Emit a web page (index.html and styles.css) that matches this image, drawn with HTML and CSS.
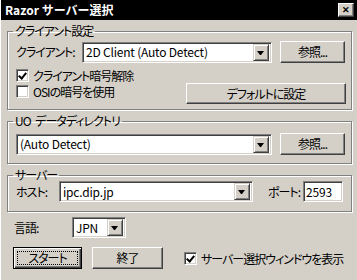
FILE: index.html
```html
<!DOCTYPE html>
<html lang="ja">
<head>
    <meta charset="UTF-8">
    <title>Razor サーバー選択</title>
    <link rel="stylesheet" href="styles.css">
</head>
<body>
    <div class="window">
        <div class="titlebar">
            <span class="title">Razor サーバー選択</span>
            <span class="close">&#x2715;</span>
        </div>
        <div class="content">
            <fieldset class="group group-client">
                <legend>クライアント設定</legend>
                <div class="row">
                    <span class="label label-client">クライアント:</span>
                    <div class="combo combo-client">
                        <span class="combo-text">2D Client (Auto Detect)</span>
                        <span class="drop"></span>
                    </div>
                    <button class="btn btn-browse">参照...</button>
                </div>
                <div class="row row-options">
                    <div class="checks">
                        <label class="check"><span class="box checked"></span>クライアント暗号解除</label>
                        <label class="check"><span class="box"></span>OSIの暗号を使用</label>
                    </div>
                    <button class="btn btn-default">デフォルトに設定</button>
                </div>
            </fieldset>

            <fieldset class="group group-dir">
                <legend>UO データディレクトリ</legend>
                <div class="row">
                    <div class="combo combo-dir">
                        <span class="combo-text">(Auto Detect)</span>
                        <span class="drop"></span>
                    </div>
                    <button class="btn btn-browse">参照...</button>
                </div>
            </fieldset>

            <fieldset class="group group-server">
                <legend>サーバー</legend>
                <div class="row">
                    <span class="label label-host">ホスト:</span>
                    <div class="combo combo-host">
                        <span class="combo-text">ipc.dip.jp</span>
                        <span class="drop"></span>
                    </div>
                    <span class="label label-port">ポート:</span>
                    <div class="field field-port">2593</div>
                </div>
            </fieldset>

            <div class="row row-lang">
                <span class="label label-lang">言語:</span>
                <div class="combo combo-lang">
                    <span class="combo-text">JPN</span>
                    <span class="drop"></span>
                </div>
            </div>

            <div class="row row-actions">
                <button class="btn btn-start"><span class="focus">スタート</span></button>
                <button class="btn btn-exit">終了</button>
                <label class="check check-show"><span class="box checked"></span>サーバー選択ウィンドウを表示</label>
            </div>
        </div>
    </div>
</body>
</html>
```

FILE: styles.css
```css
body {
    margin: 0;
    background: #d4d0c8;
    font-family: "Noto Sans CJK JP", sans-serif;
    font-size: 12px;
    font-feature-settings: "palt";
    letter-spacing: -1px;
    word-spacing: 3px;
    color: #000000;
    width: 357px;
    height: 280px;
    overflow: hidden;
    white-space: nowrap;
}
.window {
    height: 280px;
    box-sizing: border-box;
    border-left: 1px solid #ffffff;
}
.titlebar {
    height: 20px;
    background: #000000;
    display: flex;
    align-items: center;
    justify-content: space-between;
    padding: 0 3px 0 4px;
}
.title {
    color: #ffffff;
    font-weight: bold;
    font-feature-settings: normal;
    letter-spacing: 0;
    word-spacing: 0;
    line-height: 14px;
}
.close {
    width: 16px;
    height: 14px;
    box-sizing: border-box;
    background: #d4d0c8;
    border: 1px solid;
    border-color: #ffffff #404040 #404040 #ffffff;
    box-shadow: inset -1px -1px 0 #808080;
    font-size: 9px;
    font-weight: bold;
    letter-spacing: 0;
    line-height: 12px;
    text-align: center;
}
.content {
    padding: 5px 5px 0 6px;
}
.group {
    margin: 0;
    border: 1px solid #808080;
    box-shadow: inset 1px 1px 0 #ffffff, 1px 1px 0 #ffffff;
    padding: 4px 5px 5px 8px;
}
.group legend {
    padding: 0 2px;
    margin-left: -3px;
    line-height: 12px;
}
.group-dir {
    margin-top: 5px;
    padding-top: 6px;
    padding-bottom: 8px;
}
.group-server {
    margin-top: 5px;
    padding-top: 0;
    padding-bottom: 9px;
}
.row {
    display: flex;
    align-items: center;
}
.label {
    line-height: 14px;
    flex-shrink: 0;
}
.label-client { width: 66px; }
.label-host { width: 43px; }
.label-port { margin-left: 15px; width: 35px; }
.label-lang { width: 58px; }

/* sunken edit / combo */
.combo, .field {
    height: 21px;
    box-sizing: border-box;
    flex-shrink: 0;
    background: #ffffff;
    border: 1px solid;
    border-color: #808080 #ffffff #ffffff #808080;
    box-shadow: inset 1px 1px 0 #404040, inset -1px -1px 0 #d4d0c8;
    display: flex;
    align-items: center;
    padding: 2px;
    letter-spacing: -0.2px;
    word-spacing: 0;
}
.combo-text {
    flex: 1;
    padding-left: 1px;
    line-height: 14px;
}
.drop {
    width: 16px;
    height: 17px;
    box-sizing: border-box;
    flex-shrink: 0;
    background: #d4d0c8;
    border: 1px solid;
    border-color: #d4d0c8 #404040 #404040 #d4d0c8;
    box-shadow: inset 1px 1px 0 #ffffff, inset -1px -1px 0 #808080;
    position: relative;
}
.drop::after {
    content: "";
    position: absolute;
    left: 3px;
    top: 6px;
    border-left: 3px solid transparent;
    border-right: 3px solid transparent;
    border-top: 4px solid #000000;
    width: 1px;
}
.combo-client { width: 190px; }
.combo-dir { width: 256px; }
.combo-host { width: 194px; }
.field-port {
    width: 40px;
    line-height: 14px;
}
.combo-lang { width: 54px; }

/* raised buttons */
.btn {
    font: inherit;
    letter-spacing: inherit;
    color: #000000;
    height: 22px;
    box-sizing: border-box;
    flex-shrink: 0;
    background: #d4d0c8;
    border: 1px solid;
    border-color: #ffffff #404040 #404040 #ffffff;
    box-shadow: inset -1px -1px 0 #808080;
    padding: 0;
    line-height: 14px;
}
.btn-browse {
    width: 65px;
    margin-left: 8px;
}
.row-options {
    align-items: flex-end;
    justify-content: space-between;
    margin-top: 6px;
}
.checks {
    display: flex;
    flex-direction: column;
    gap: 3px;
    padding-bottom: 6px;
}
.btn-default {
    width: 160px;
    height: 21px;
}
.check {
    display: flex;
    align-items: center;
    line-height: 13px;
}
.box {
    width: 13px;
    height: 13px;
    box-sizing: border-box;
    flex-shrink: 0;
    background: #ffffff;
    border: 1px solid;
    border-color: #808080 #ffffff #ffffff #808080;
    box-shadow: inset 1px 1px 0 #404040, inset -1px -1px 0 #d4d0c8;
    margin-right: 4px;
    position: relative;
}
.box.checked::after {
    content: "";
    position: absolute;
    left: 3px;
    top: 1px;
    width: 3px;
    height: 6px;
    border: solid #000000;
    border-width: 0 2px 2px 0;
    transform: rotate(40deg);
}
.row-lang {
    margin-top: 5px;
    padding-left: 7px;
}
.row-actions {
    margin-top: 9px;
    padding-left: 6px;
}
.btn-start {
    width: 69px;
    border: 1px solid #000000;
    box-shadow: inset 1px 1px 0 #ffffff, inset -1px -1px 0 #404040, inset -2px -2px 0 #808080;
    padding: 3px;
}
.focus {
    display: block;
    border: 1px dotted #000000;
    line-height: 12px;
}
.btn-exit {
    width: 71px;
    margin-left: 10px;
}
.check-show {
    margin-left: 21px;
}
```
